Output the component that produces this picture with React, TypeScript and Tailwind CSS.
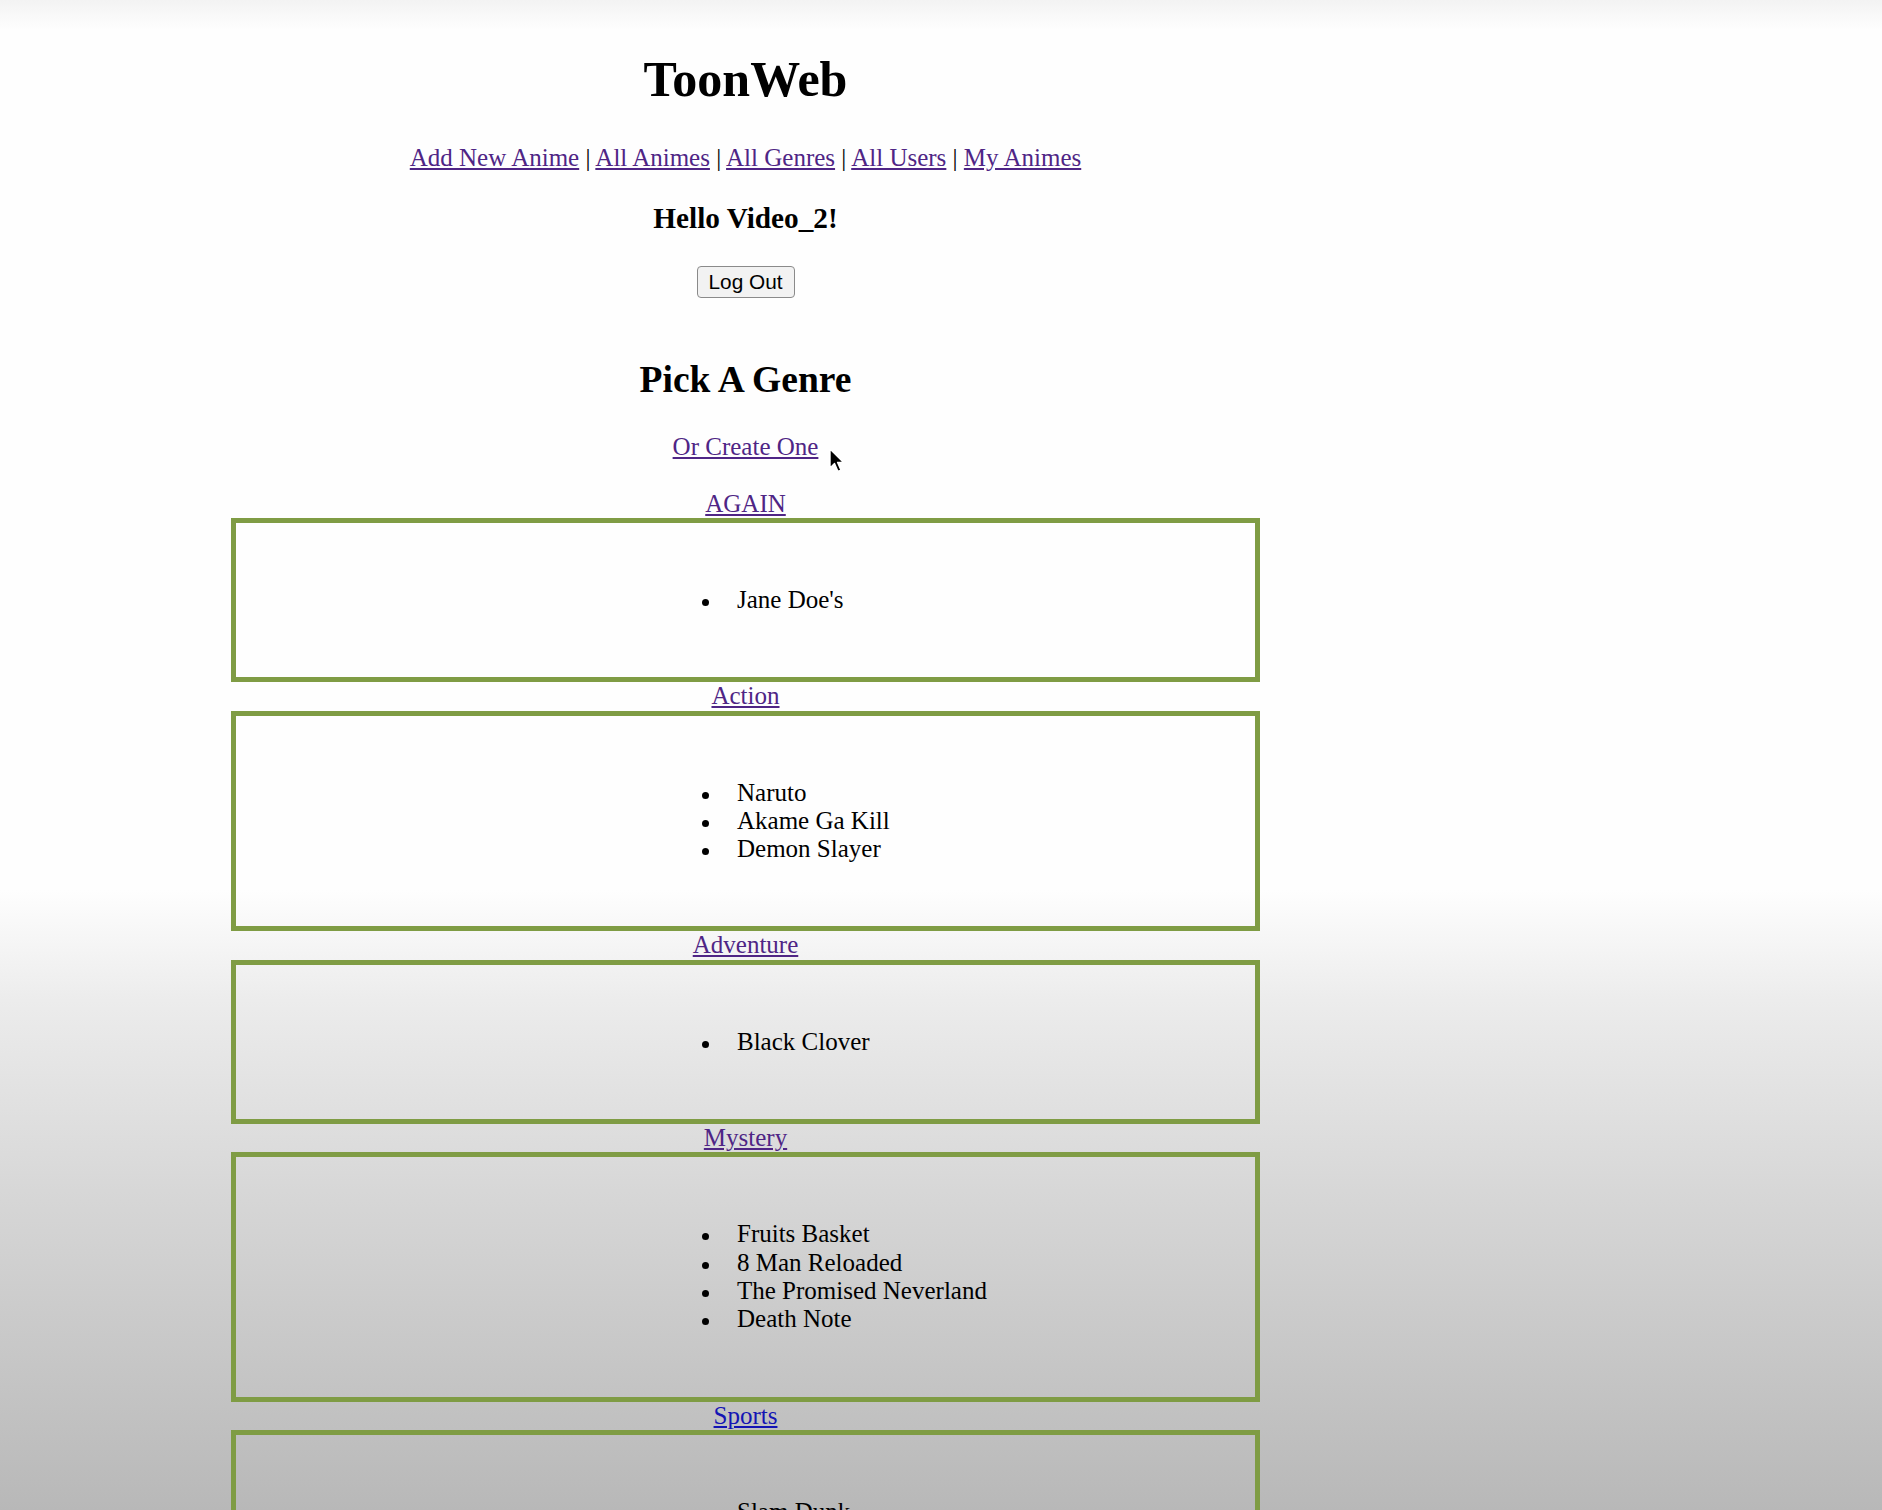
const navLinks = ["Add New Anime", "All Animes", "All Genres", "All Users", "My Animes"];

const genres = [
  { name: "AGAIN", animes: ["Jane Doe's"], visited: true },
  { name: "Action", animes: ["Naruto", "Akame Ga Kill", "Demon Slayer"], visited: true },
  { name: "Adventure", animes: ["Black Clover"], visited: true },
  { name: "Mystery", animes: ["Fruits Basket", "8 Man Reloaded", "The Promised Neverland", "Death Note"], visited: true },
  { name: "Sports", animes: ["Slam Dunk"], visited: false },
];

const Cursor = () => (
  <svg className="absolute left-[829px] top-[448px]" width="18" height="27" viewBox="0 0 18 27">
    <path
      d="M1 1 L1 20 L5.5 15.5 L9 23.5 L12 22.2 L8.6 14.4 L14.6 14.4 Z"
      fill="#000"
      stroke="#fff"
      strokeWidth="1.4"
      strokeLinejoin="round"
    />
  </svg>
);

const App = () => {
  return (
    <div className="relative h-[1510px] overflow-hidden bg-[linear-gradient(to_bottom,#f3f3f3_0px,#fefefe_30px,#fefefe_890px,#ececec_1000px,#d6d6d6_1200px,#b8b8b8_1510px)] font-['Liberation_Serif',serif] text-[25px] leading-[28.3px] text-black">
      <div className="ml-[231px] w-[1029px] flex flex-col items-center text-center">
        <h1 className="mt-[51px] text-[50px] leading-[57.5px] font-bold">ToonWeb</h1>

        <nav className="mt-[35px]">
          {navLinks.map((link, i) => (
            <span key={link}>
              {i > 0 && " | "}
              <a href="#" className="text-[#4f2585] underline">
                {link}
              </a>
            </span>
          ))}
        </nav>

        <h3 className="mt-[30px] text-[29.25px] leading-[33.6px] font-bold">Hello Video_2!</h3>

        <button className="mt-[31px] h-[32px] w-[98px] rounded-[4px] border border-[#8a8a8a] bg-[#f2f2f2] font-['Liberation_Sans',Arial,sans-serif] text-[20.8px] leading-none text-black">
          Log Out
        </button>

        <h2 className="mt-[60px] text-[37.5px] leading-[43px] font-bold">Pick A Genre</h2>

        <a href="#" className="mt-[32px] text-[#4f2585] underline">
          Or Create One
        </a>

        <div className="mt-[28px] w-full">
          {genres.map((genre) => (
            <div key={genre.name}>
              <a
                href="#"
                className={genre.visited ? "text-[#4f2585] underline" : "text-[#1414b4] underline"}
              >
                {genre.name}
              </a>
              <div className="border-[5px] border-[#7f9c44] py-[63px] text-left">
                <ul className="pl-[501px]">
                  {genre.animes.map((anime) => (
                    <li
                      key={anime}
                      className="relative before:absolute before:left-[-35px] before:top-[13px] before:h-[7px] before:w-[7px] before:rounded-full before:bg-black before:content-['']"
                    >
                      {anime}
                    </li>
                  ))}
                </ul>
              </div>
            </div>
          ))}
        </div>
      </div>

      <Cursor />
    </div>
  );
};

export default App;
